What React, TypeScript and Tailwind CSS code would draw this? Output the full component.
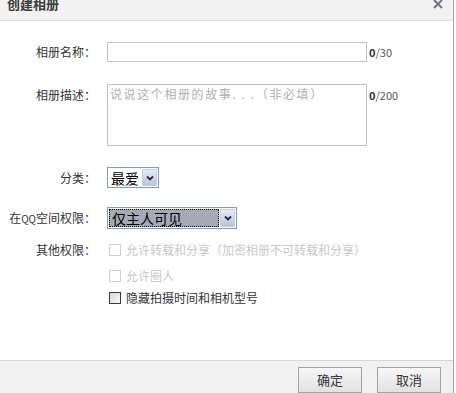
import React from 'react';

const font = { fontFamily: '"Noto Sans CJK SC", "Noto Sans", sans-serif' };

function Chevron() {
  return (
    <svg width="8" height="6" viewBox="0 0 8 6">
      <path d="M1 1.5 L4 4.5 L7 1.5" stroke="#1b2a4a" strokeWidth="1.8" fill="none" />
    </svg>
  );
}

function DropButton() {
  return (
    <div className="w-[15px] h-full flex items-center justify-center border border-[#c3cde0] bg-gradient-to-b from-[#e6ebf5] to-[#b9c4da] rounded-[1px]">
      <Chevron />
    </div>
  );
}

function Check({ label, disabled }: { label: string; disabled?: boolean }) {
  return (
    <div className="flex items-center h-[20px]">
      <span
        className={
          disabled
            ? 'w-[12px] h-[12px] ml-[2px] mr-[5px] border border-[#cfcfcf] bg-white'
            : 'w-[12px] h-[12px] ml-[2px] mr-[5px] border border-[#2f3d4c] bg-gradient-to-br from-[#d8d8d2] to-[#f8f8f6]'
        }
      />
      <span className={disabled ? 'text-[12px] text-[#c8c8c8]' : 'text-[12px] text-[#333]'}>{label}</span>
    </div>
  );
}

export default function App() {
  return (
    <div className="w-[456px] h-[393px] bg-white overflow-hidden" style={font}>
      <div className="w-[454px] h-full border-r border-[#a8a8a8] flex flex-col">
        {/* title */}
        <div className="h-[21px] shrink-0 bg-[#f2f2f2] border-b border-[#dadada] flex justify-between overflow-hidden">
          <span className="ml-[7px] mt-[-3px] text-[13px] leading-[14px] font-bold text-[#3a3a3a]">创建相册</span>
          <svg className="mr-[10px] mt-[-1px]" width="10" height="10" viewBox="0 0 10 10">
            <path d="M1 1 L9 9 M9 1 L1 9" stroke="#6f7680" strokeWidth="2" />
          </svg>
        </div>

        {/* body */}
        <div className="h-[339px] shrink-0 text-[12px] text-[#333]">
          <div className="grid grid-cols-[96px_1fr] gap-x-[11px] mt-[21px]">
            <span className="h-[20px] flex items-center justify-end">相册名称：</span>
            <div className="flex items-center">
              <div className="w-[260px] h-[20px] border border-[#c2c2c2] bg-white" />
              <span className="ml-[2px] text-[11px] text-[#555]">
                <b className="text-[#333]">0</b>/30
              </span>
            </div>

            <span className="mt-[22px] pt-[2px] h-[20px] flex items-center justify-end">相册描述：</span>
            <div className="mt-[22px] flex items-start">
              <div className="w-[260px] h-[62px] border border-[#c2c2c2] bg-white px-[2px] pt-[1px] text-[12px] leading-[16px] text-[#b0b0b0] tracking-[1.6px] whitespace-nowrap overflow-hidden">
                说说这个相册的故事. . .（非必填）
              </div>
              <span className="ml-[2px] mt-[3px] text-[11px] text-[#555]">
                <b className="text-[#333]">0</b>/200
              </span>
            </div>

            <span className="mt-[21px] h-[21px] flex items-center justify-end">分类：</span>
            <div className="mt-[21px]">
              <div className="w-[52px] h-[21px] border border-[#7f9db9] bg-white flex items-stretch p-[1px]">
                <span className="flex-1 flex items-center pl-[2px] text-[14px] text-black leading-none">最爱</span>
                <DropButton />
              </div>
            </div>

            <span className="mt-[19px] h-[22px] flex items-center justify-end">
              在<span className="text-[10px]">QQ</span>空间权限：
            </span>
            <div className="mt-[19px]">
              <div className="w-[130px] h-[22px] border border-[#7f9db9] bg-white flex items-stretch p-[1px]">
                <span className="flex-1 mr-[1px] flex items-center pl-[2px] bg-[#a7a8b8] border border-dotted border-black text-[14px] text-black leading-none">
                  仅主人可见
                </span>
                <DropButton />
              </div>
            </div>

            <span className="mt-[11px] h-[20px] flex items-center justify-end">其他权限：</span>
            <div className="mt-[11px] flex flex-col">
              <Check label="允许转载和分享（加密相册不可转载和分享）" disabled />
              <div className="mt-[6px]">
                <Check label="允许圈人" disabled />
              </div>
              <div className="mt-[2px]">
                <Check label="隐藏拍摄时间和相机型号" />
              </div>
            </div>
          </div>
        </div>

        {/* footer */}
        <div className="flex-1 bg-[#f1f1f1] border-t border-[#d6d6d6] flex justify-end items-start pt-[6px] pr-[12px] gap-[15px]">
          <button className="w-[64px] h-[26px] border border-[#a3a3a3] bg-gradient-to-b from-[#f7f7f7] to-[#e2e2e2] text-[13px] text-[#333]">
            确定
          </button>
          <button className="w-[64px] h-[26px] border border-[#a3a3a3] bg-gradient-to-b from-[#f7f7f7] to-[#e2e2e2] text-[13px] text-[#333]">
            取消
          </button>
        </div>
      </div>
    </div>
  );
}
